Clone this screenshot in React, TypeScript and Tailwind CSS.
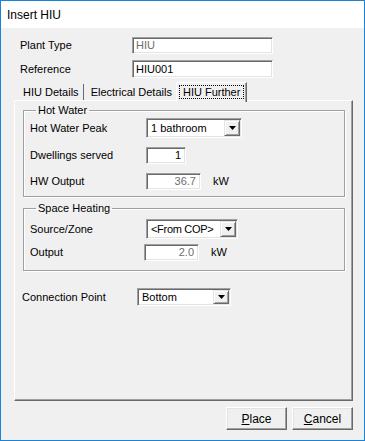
import React from "react";

const font = { fontFamily: '"Liberation Sans", Arial, sans-serif' };

function Edit({
  value,
  width,
  height = "h-[17px]",
  muted,
  right,
}: {
  value: string;
  width: string;
  height?: string;
  muted?: boolean;
  right?: boolean;
}) {
  return (
    <div
      className={`${width} ${height} flex items-center bg-white border border-t-[#a0a0a0] border-l-[#a0a0a0] border-r-white border-b-white shadow-[inset_1px_1px_0_#696969,inset_-1px_-1px_0_#e3e3e3] ${
        right ? "justify-end pr-[4px]" : "pl-[3px]"
      } ${muted ? "text-[#6d6d6d]" : "text-black"}`}
    >
      {value}
    </div>
  );
}

function Combo({
  value,
  width,
  height = "h-[20px]",
  tight,
}: {
  value: string;
  width: string;
  height?: string;
  tight?: boolean;
}) {
  return (
    <div
      className={`${width} ${height} flex items-stretch bg-white border border-t-[#a0a0a0] border-l-[#a0a0a0] border-r-white border-b-white shadow-[inset_1px_1px_0_#696969,inset_-1px_-1px_0_#e3e3e3] p-[1px]`}
    >
      <div className={`flex-1 flex items-center pl-[3px] ${tight ? "tracking-[-0.3px]" : ""}`}>{value}</div>
      <div className="w-[16px] flex items-center justify-center bg-[#f0f0f0] border border-t-[#e3e3e3] border-l-[#e3e3e3] border-r-[#696969] border-b-[#696969] shadow-[inset_1px_1px_0_#fff,inset_-1px_-1px_0_#a0a0a0]">
        <svg width="7" height="4" viewBox="0 0 7 4">
          <path d="M0 0h7L3.5 4z" fill="#000" />
        </svg>
      </div>
    </div>
  );
}

function Group({ title, children, className }: { title: string; children: React.ReactNode; className: string }) {
  return (
    <fieldset
      className={`border border-[#a0a0a0] shadow-[1px_1px_0_#fff,inset_1px_1px_0_#fff] ${className}`}
    >
      <legend className="ml-[6px] px-[2px] leading-[13px]">{title}</legend>
      {children}
    </fieldset>
  );
}

function Button({ accel, rest }: { accel: string; rest: string }) {
  return (
    <div className="w-[61px] h-[23px] flex items-center justify-center bg-[#f0f0f0] border border-t-white border-l-white border-r-[#696969] border-b-[#696969] shadow-[inset_-1px_-1px_0_#a0a0a0,inset_1px_1px_0_#e3e3e3] text-[12px]">
      <span>
        <span className="underline">{accel}</span>
        {rest}
      </span>
    </div>
  );
}

export default function App() {
  return (
    <div
      style={font}
      className="w-[365px] h-[441px] flex flex-col border border-[#1883d7] bg-[#f0f0f0] text-[11px] text-black"
    >
      <div className="h-[27px] shrink-0 bg-white flex items-center pl-[6px] text-[12px]">Insert HIU</div>

      <div className="flex-1 flex flex-col">
        <div className="mt-[9px] pl-[19px] flex items-center">
          <span className="w-[112px]">Plant Type</span>
          <Edit value="HIU" width="w-[141px]" muted />
        </div>
        <div className="mt-[6px] pl-[19px] flex items-center">
          <span className="w-[112px]">Reference</span>
          <Edit value="HIU001" width="w-[141px]" height="h-[18px]" />
        </div>

        <div className="mt-[3px] ml-[13px] w-[339px]">
          <div className="flex items-end h-[19px] pl-[3px]">
            <div className="h-[16px] pl-[6px] pr-[4px] flex items-center border-r border-r-[#696969]">HIU Details</div>
            <div className="h-[16px] pl-[7px] pr-[4px] flex items-center">Electrical Details</div>
            <div className="relative z-10 -mb-[2px] h-[20px] px-[2px] pb-[1px] flex items-center bg-[#f0f0f0] border-t border-l border-t-white border-l-white border-r border-r-[#696969] shadow-[inset_-1px_0_0_#a0a0a0]">
              <span className="border border-dotted border-black px-[3px] leading-[12px]">HIU Further</span>
            </div>
          </div>

          <div className="h-[301px] flex flex-col border border-t-white border-l-white border-r-[#696969] border-b-[#696969] shadow-[inset_-1px_-1px_0_#a0a0a0]">
            <Group title="Hot Water" className="mt-[3px] ml-[8px] mr-[7px] pl-[6px] pb-[6px]">
              <div className="mt-[1px] flex items-center h-[20px]">
                <span className="w-[116px]">Hot Water Peak</span>
                <Combo value="1 bathroom" width="w-[96px]" />
              </div>
              <div className="mt-[9px] flex items-center h-[17px]">
                <span className="w-[116px]">Dwellings served</span>
                <Edit value="1" width="w-[40px]" right />
              </div>
              <div className="mt-[9px] flex items-center h-[17px]">
                <span className="w-[116px]">HW Output</span>
                <Edit value="36.7" width="w-[55px]" muted right />
                <span className="ml-[12px]">kW</span>
              </div>
            </Group>

            <Group title="Space Heating" className="mt-[5px] ml-[8px] mr-[7px] pl-[6px] pb-[9px]">
              <div className="mt-[4px] flex items-center h-[20px]">
                <span className="w-[116px]">Source/Zone</span>
                <Combo value="<From COP>" width="w-[92px]" tight />
              </div>
              <div className="mt-[5px] flex items-center h-[17px]">
                <span className="w-[116px] -ml-[2px] pl-[2px]">Output</span>
                <Edit value="2.0" width="w-[55px]" muted right />
                <span className="ml-[12px]">kW</span>
              </div>
            </Group>

            <div className="mt-[17px] ml-[7px] flex items-center">
              <span className="w-[115px]">Connection Point</span>
              <Combo value="Bottom" width="w-[94px]" height="h-[18px]" />
            </div>
          </div>
        </div>

        <div className="mt-[6px] pr-[11px] flex justify-end gap-[5px]">
          <Button accel="P" rest="lace" />
          <Button accel="C" rest="ancel" />
        </div>
      </div>
    </div>
  );
}
